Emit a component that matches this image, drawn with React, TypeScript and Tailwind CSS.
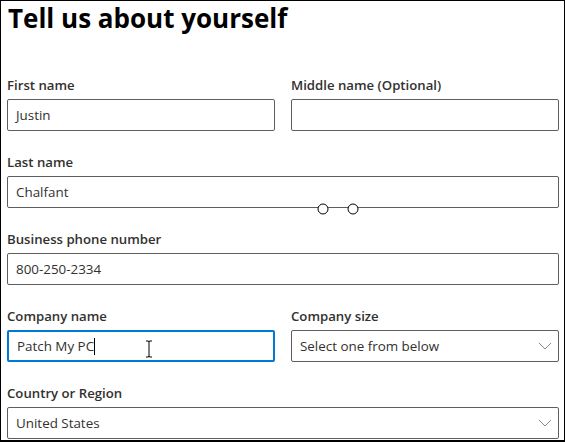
import React from 'react';

const font = { fontFamily: '"Open Sans", "Noto Sans", sans-serif' };

function Label({ children }: { children: React.ReactNode }) {
  return <div className="h-[20px] leading-[20px] text-[13.2px] font-semibold text-[#323130] mb-[4px]">{children}</div>;
}

function Field({ label, value, focused, select }: { label: string; value?: string; focused?: boolean; select?: boolean }) {
  return (
    <div>
      <Label>{label}</Label>
      <div
        className={
          'relative flex items-center h-[32px] rounded-[2px] text-[13.4px] text-[#323130] pt-[1px] ' +
          (focused ? 'border-2 border-[#0078d4] px-[8px]' : 'border border-[#605e5c] px-[8px]')
        }
      >
        <span>{value}</span>
        {focused && <span className="w-px h-[17px] bg-black" />}
        {select && (
          <svg className="absolute right-[6px] top-[11px]" width="14" height="8" viewBox="0 0 14 8">
            <path d="M1 1 L7 7 L13 1" fill="none" stroke="#8a8886" strokeWidth="1" />
          </svg>
        )}
      </div>
    </div>
  );
}

export default function App() {
  return (
    <div style={font} className="relative w-[565px] h-[442px] bg-white border border-black border-b-2 overflow-hidden">
      <h1 className="px-[7px] pt-[1px] h-[74px] text-[26px] leading-[32px] font-bold text-black">Tell us about yourself</h1>
      <div className="pl-[6px] pr-[5px] grid grid-cols-2 gap-x-[16px] gap-y-[21px]">
        <Field label="First name" value="Justin" />
        <Field label="Middle name (Optional)" />
        <div className="col-span-2">
          <Field label="Last name" value="Chalfant" />
        </div>
        <div className="col-span-2">
          <Field label="Business phone number" value="800-250-2334" />
        </div>
        <Field label="Company name" value="Patch My PC" focused />
        <Field label="Company size" value="Select one from below" select />
        <div className="col-span-2">
          <Field label="Country or Region" value="United States" select />
        </div>
      </div>

      {/* resize handles on the last name box */}
      <svg className="absolute left-[315px] top-[201px]" width="45" height="14" viewBox="0 0 45 14">
        <circle cx="7" cy="7" r="5" fill="white" stroke="black" strokeWidth="1" />
        <circle cx="37" cy="7" r="5" fill="white" stroke="black" strokeWidth="1" />
      </svg>

      {/* text cursor */}
      <svg className="absolute left-[143px] top-[339px]" width="10" height="18" viewBox="0 0 10 18">
        <path d="M2 1 H4 M6 1 H8 M5 1.5 V16.5 M2 17 H4 M6 17 H8 M4 1 Q5 1 5 2 Q5 1 6 1 M4 17 Q5 17 5 16 Q5 17 6 17" fill="none" stroke="black" strokeWidth="1" />
      </svg>
    </div>
  );
}
